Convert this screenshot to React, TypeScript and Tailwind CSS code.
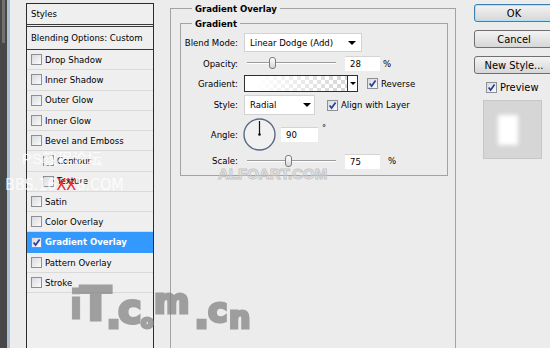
import React from "react";

const ui = "font-[family-name:'DejaVu_Sans_Condensed','DejaVu_Sans',sans-serif]";

const styles: { label: string; indent?: boolean; on?: boolean }[] = [
  { label: "Drop Shadow" },
  { label: "Inner Shadow" },
  { label: "Outer Glow" },
  { label: "Inner Glow" },
  { label: "Bevel and Emboss" },
  { label: "Contour", indent: true },
  { label: "Texture", indent: true },
  { label: "Satin" },
  { label: "Color Overlay" },
  { label: "Gradient Overlay", on: true },
  { label: "Pattern Overlay" },
  { label: "Stroke" },
];

function Check({ on }: { on?: boolean }) {
  return (
    <span className="w-[11px] h-[11px] shrink-0 border border-[#8c8f94] bg-linear-to-br from-[#d9dadd] to-[#fbfbfb] flex items-center justify-center">
      {on && (
        <svg viewBox="0 0 9 9" className="w-[9px] h-[9px]">
          <path d="M1.6 4.4 L3.6 7 L7.6 1.5" fill="none" stroke="#2b3d9c" strokeWidth="1.7" />
        </svg>
      )}
    </span>
  );
}

function Caret() {
  return <span className="w-0 h-0 border-l-[4px] border-r-[4px] border-t-[4px] border-l-transparent border-r-transparent border-t-black" />;
}

function Slider({ pos }: { pos: number }) {
  return (
    <div className="relative w-[96px] h-full shrink-0">
      <div className="absolute left-[3px] right-[4px] top-[7px] h-[2px] border-t border-[#9b9b9b] border-b border-b-white" />
      <div
        className="absolute top-[2px] w-[7px] h-[12px] rounded-[3px] border border-[#7c7c7c] bg-linear-to-b from-white to-[#d6d6d6]"
        style={{ left: pos }}
      />
    </div>
  );
}

function Field({ value, w }: { value: string; w: string }) {
  return <div className={`${w} h-[15px] bg-white border-t border-[#d4d4d4] flex items-center pl-[5px] shrink-0`}>{value}</div>;
}

function Label({ children }: { children: React.ReactNode }) {
  return <span className="w-[58px] text-right pr-[1px] shrink-0 mr-[5px]">{children}</span>;
}

export default function App() {
  return (
    <div className={`${ui} relative w-[550px] h-[348px] overflow-hidden bg-[#ececec] flex text-black text-[9.5px] leading-none`}>
      {/* desktop edge behind the dialog */}
      <div className="w-[10px] flex shrink-0">
        <div className="w-[7px] bg-[#474747] flex flex-col">
          <div className="h-[43px] ml-[2px] w-[3px] bg-[#707070]" />
        </div>
        <div className="w-[3px] bg-[#abc1d8]" />
      </div>
      <div className="w-[16px] shrink-0" />

      {/* styles list */}
      <div className="w-[128px] shrink-0 mt-[3px] border-l border-r border-t border-[#2c2c2c] bg-[#efefef] flex flex-col">
        <div className="h-[21px] flex items-center pl-[4px] border-b border-[#3a3a3a]">Styles</div>
        <div className="h-[24px] mt-[1px] flex items-center pl-[4px] border-t border-b border-[#3a3a3a]">Blending Options: Custom</div>
        {styles.map((s) => (
          <div
            key={s.label}
            className={`h-[20.27px] shrink-0 flex items-center gap-[3px] border-b ${s.on ? "bg-[#3399ff] text-white font-bold border-[#3399ff]" : "border-[#dadada]"} ${s.indent ? "pl-[16px]" : "pl-[4px]"}`}
          >
            <Check on={s.on} />
            <span>{s.label}</span>
          </div>
        ))}
      </div>
      <div className="w-[16px] shrink-0" />

      {/* gradient overlay group */}
      <fieldset className="w-[286px] shrink-0 min-w-0 mt-[2px] border border-b-0 border-[#a3a3a3] px-[9px]">
        <legend className="ml-[12px] px-[3px] font-bold leading-[13px]">Gradient Overlay</legend>
        <fieldset className="mt-[2px] w-[268px] border border-[#a3a3a3] pt-[3px] pb-[6px]">
          <legend className="ml-[11px] px-[3px] font-bold leading-[13px]">Gradient</legend>
          <div className="flex flex-col">
            <div className="h-[19px] flex items-center">
              <Label>Blend Mode:</Label>
              <div className="w-[118px] h-[19px] bg-white border border-[#d2d2d2] flex items-center justify-between pl-[5px] pr-[5px]">
                <span>Linear Dodge (Add)</span>
                <Caret />
              </div>
            </div>
            <div className="mt-[3px] h-[17px] flex items-center">
              <Label>Opacity:</Label>
              <Slider pos={25} />
              <div className="ml-[5px]"><Field value="28" w="w-[35px]" /></div>
              <span className="ml-[3px]">%</span>
            </div>
            <div className="mt-[3px] h-[17px] flex items-center">
              <Label>Gradient:</Label>
              <div className="w-[104px] h-[17px] border border-[#2f2f2f] bg-[linear-gradient(to_right,#ffffff_12%,rgba(255,255,255,0)_92%),repeating-conic-gradient(#d8d8d8_0%_25%,#ffffff_0%_50%)] bg-[length:100%_100%,8px_8px]" />
              <div className="w-[10px] h-[17px] border border-l-0 border-[#2f2f2f] bg-white flex items-center justify-center">
                <span className="w-0 h-0 border-l-[3px] border-r-[3px] border-t-[3px] border-l-transparent border-r-transparent border-t-black" />
              </div>
              <span className="ml-[9px]"><Check on /></span>
              <span className="ml-[3px]">Reverse</span>
            </div>
            <div className="mt-[3px] h-[20px] flex items-center">
              <Label>Style:</Label>
              <div className="w-[71px] h-[20px] bg-white border border-[#d2d2d2] flex items-center justify-between pl-[5px] pr-[3px]">
                <span>Radial</span>
                <Caret />
              </div>
              <span className="ml-[12px]"><Check on /></span>
              <span className="ml-[3px]">Align with Layer</span>
            </div>
            <div className="mt-[3px] h-[33px] flex items-center">
              <Label>Angle:</Label>
              <svg width="33" height="33" viewBox="0 0 33 33" className="shrink-0 -ml-[1px]">
                <circle cx="16.5" cy="16.5" r="15.5" fill="#f1f1f1" stroke="#5a6885" strokeWidth="1.4" />
                <line x1="16.5" y1="16.5" x2="16.5" y2="3" stroke="#111" strokeWidth="1.2" />
                <circle cx="16.5" cy="16.5" r="1.3" fill="#111" />
              </svg>
              <div className="ml-[5px]"><Field value="90" w="w-[37px]" /></div>
              <span className="ml-[4px] self-start mt-[6px] text-[9px]">°</span>
            </div>
            <div className="mt-[2px] h-[16px] flex items-center">
              <Label>Scale:</Label>
              <Slider pos={41} />
              <div className="ml-[5px]"><Field value="75" w="w-[35px]" /></div>
              <span className="ml-[8px]">%</span>
            </div>
          </div>
        </fieldset>
      </fieldset>

      {/* buttons */}
      <div className="flex-1 pl-[18px] flex flex-col text-[11px]">
        <button className="mt-[4px] w-[80px] h-[18px] shrink-0 rounded-[3px] border border-[#3c7fb1] shadow-[inset_0_0_0_1px_#a9e3fa] bg-linear-to-b from-[#f3f3f3] to-[#d7d7d7] leading-none">OK</button>
        <button className="mt-[8px] w-[80px] h-[18px] shrink-0 rounded-[3px] border border-[#707070] bg-linear-to-b from-[#f3f3f3] to-[#d7d7d7] leading-none">Cancel</button>
        <button className="mt-[8px] w-[80px] h-[18px] shrink-0 rounded-[3px] border border-[#707070] bg-linear-to-b from-[#f3f3f3] to-[#d7d7d7] leading-none">New Style...</button>
        <div className="mt-[7px] h-[13px] flex items-center pl-[12px] gap-[3px]">
          <Check on />
          <span>Preview</span>
        </div>
        <div className="mt-[6px] ml-[9px] w-[59px] h-[59px] bg-[#d6d6d6] border border-[#c6c6c6] flex items-center pl-[14px]">
          <div className="w-[20px] h-[30px] bg-white blur-[2px]" />
        </div>
      </div>

      {/* watermarks */}
      <div className="absolute left-[218px] top-[166px] font-[family-name:'Liberation_Sans',sans-serif] font-bold text-[15px] text-transparent [-webkit-text-stroke:1px_#c6c6c6]">ALFOART.COM</div>
      <div className="absolute left-[22px] top-[151px] font-[family-name:'Liberation_Sans','Noto_Sans_CJK_SC',sans-serif] text-[15px] text-white/80">PS教程论坛</div>
      <div className="absolute left-[5px] top-[177px] text-[16px] text-white/80">
        BBS.16<span className="text-[#e3261f]">XX</span>8.COM
      </div>
      <div className="absolute inset-0 font-[family-name:'DejaVu_Sans',sans-serif] font-bold text-[#7e7e7e] [-webkit-text-stroke:3px_#7e7e7e] opacity-70 leading-none pointer-events-none">
        <span className="absolute left-[69px] top-[285px] text-[41px] [-webkit-text-stroke:1px_#7e7e7e]">i</span>
        <span className="absolute left-[80px] top-[281px] text-[46px]">T</span>
        <span className="absolute left-[106px] top-[294px] text-[40px]">.</span>
        <span className="absolute left-[118px] top-[289px] text-[40px]">c</span>
        <span className="absolute left-[141px] top-[313px] text-[18px]">o</span>
        <span className="absolute left-[154px] top-[284px] text-[34px]">m</span>
        <span className="absolute left-[194px] top-[294px] text-[40px]">.</span>
        <span className="absolute left-[208px] top-[294px] text-[33px]">c</span>
        <span className="absolute left-[229px] top-[303px] text-[30px]">n</span>
      </div>
    </div>
  );
}
